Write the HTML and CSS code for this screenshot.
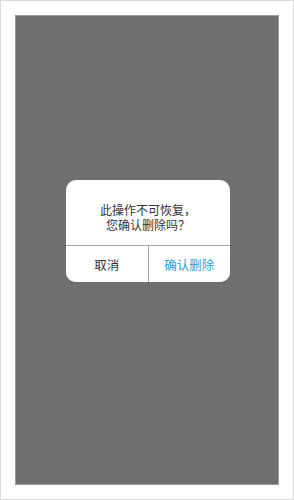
FILE: index.html
```html
<!DOCTYPE html>
<html lang="zh-CN">
<head>
  <meta charset="UTF-8" />
  <meta name="viewport" content="width=device-width, initial-scale=1.0"/>
  <title>确认删除</title>
  <link rel="stylesheet" href="styles.css">
</head>
<body>
  <div class="frame">
    <div class="mask">
      <div class="dialog">
        <div class="dialog-msg">
          <p>此操作不可恢复，</p>
          <p>您确认删除吗？</p>
        </div>
        <div class="dialog-btns">
          <button class="btn-cancel">取消</button>
          <button class="btn-ok">确认删除</button>
        </div>
      </div>
    </div>
  </div>
</body>
</html>
```

FILE: styles.css
```css
html, body {
  margin: 0;
  height: 100%;
}

body {
  font-family: "Liberation Sans", "Noto Sans CJK SC", sans-serif;
  background: #fff;
}

.frame {
  box-sizing: border-box;
  height: 500px;
  border: 1px solid #dcdcdc;
  padding: 14px;
}

.mask {
  box-sizing: border-box;
  height: 470px;
  background: #6f6f6f;
  border: 1px solid #9a9a9a;
  display: flex;
  flex-direction: column;
  align-items: center;
  padding-top: 164px;
}

.dialog {
  width: 164px;
  margin-left: 2px;
  background: #fff;
  border-radius: 10px;
  overflow: hidden;
}

.dialog-msg {
  height: 66px;
  box-sizing: border-box;
  padding-top: 24px;
  text-align: center;
  font-size: 12px;
  color: #333;
  border-bottom: 1px solid #a6a6a6;
}

.dialog-msg p {
  margin: 0;
  line-height: 15px;
}

.dialog-btns {
  display: flex;
  height: 36px;
}

.dialog-btns button {
  flex: 1;
  border: none;
  background: #fff;
  font-family: inherit;
  font-size: 12.5px;
  padding: 0;
  cursor: pointer;
}

.btn-cancel {
  color: #333;
  border-right: 1px solid #a6a6a6 !important;
}

.btn-ok {
  color: #1e9fd8;
}
```
